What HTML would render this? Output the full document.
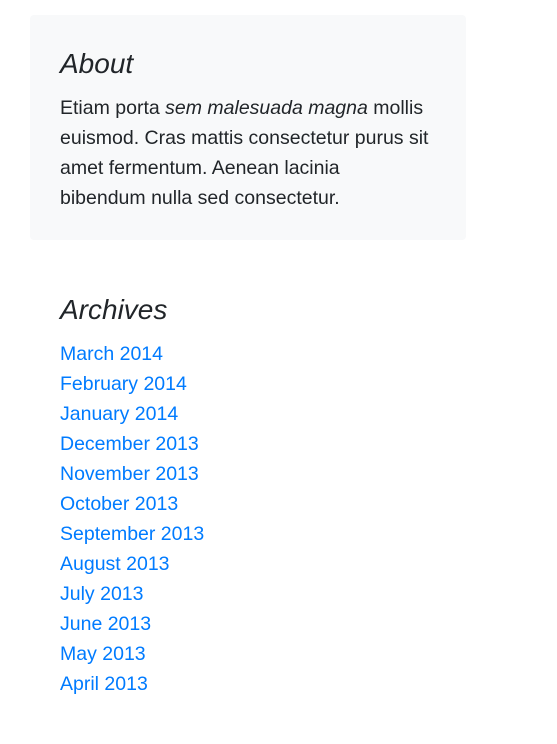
<!DOCTYPE html>
<html><head><meta charset="utf-8">
<style>
html,body{margin:0;padding:0;background:#fff;width:557px;height:744px;overflow:hidden}
body{font-family:"Liberation Sans",Arial,sans-serif;color:#212529;font-size:19.5px;line-height:30px}
.box{position:absolute;left:30px;top:15px;width:436px;height:225px;background:#f8f9fa;border-radius:4px}
h4{margin:0;font-weight:400;font-style:italic;font-size:28px;line-height:34px;position:absolute;left:60px}
.p{position:absolute;left:60px;top:93px;white-space:nowrap}
ol{list-style:none;margin:0;padding:0;position:absolute;left:60px;top:339px}
li{line-height:30px;height:30px}
a{color:#007bff;text-decoration:none}
</style></head><body>
<div class="box"></div>
<h4 style="top:47px">About</h4>
<div class="p">Etiam porta <em>sem malesuada magna</em> mollis<br>euismod. Cras mattis consectetur purus sit<br>amet fermentum. Aenean lacinia<br>bibendum nulla sed consectetur.</div>
<h4 style="top:293px">Archives</h4>
<ol>
<li><a href="#">March 2014</a></li>
<li><a href="#">February 2014</a></li>
<li><a href="#">January 2014</a></li>
<li><a href="#">December 2013</a></li>
<li><a href="#">November 2013</a></li>
<li><a href="#">October 2013</a></li>
<li><a href="#">September 2013</a></li>
<li><a href="#">August 2013</a></li>
<li><a href="#">July 2013</a></li>
<li><a href="#">June 2013</a></li>
<li><a href="#">May 2013</a></li>
<li><a href="#">April 2013</a></li>
</ol>
</body></html>
